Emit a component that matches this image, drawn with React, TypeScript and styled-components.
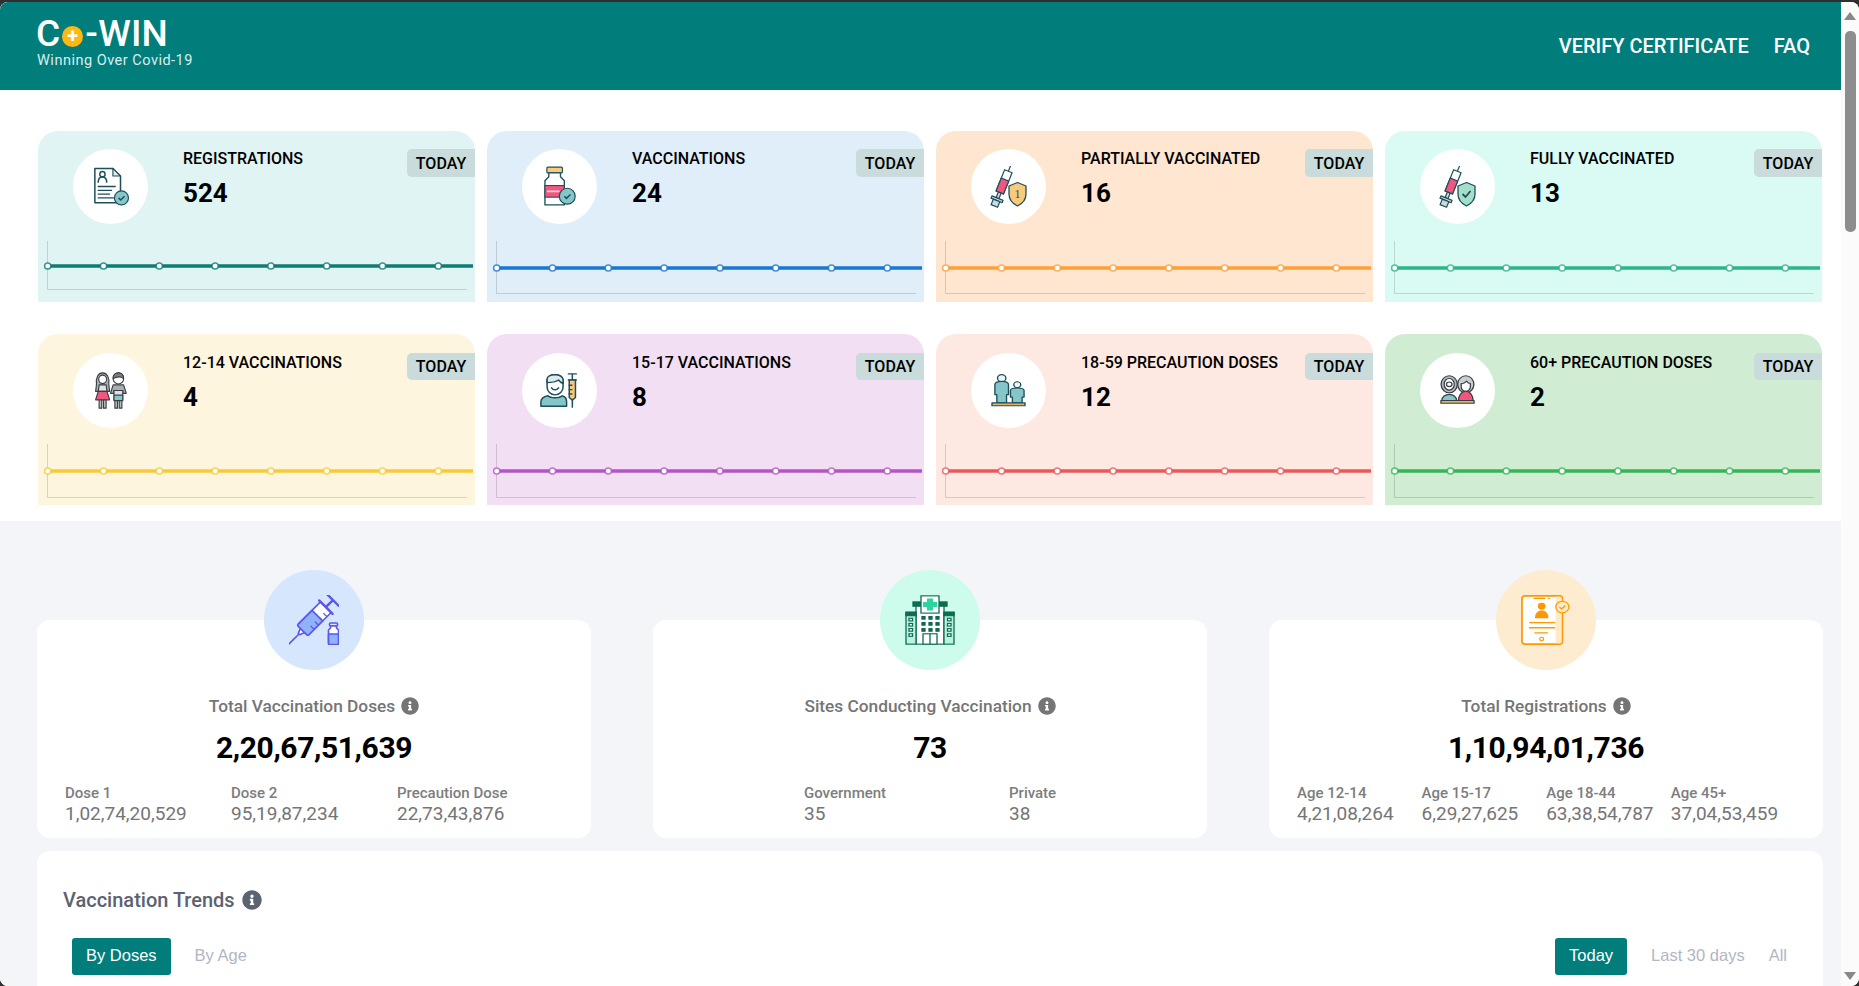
import styled, { createGlobalStyle } from 'styled-components';
import { FaInfoCircle } from 'react-icons/fa';

const GlobalStyle = createGlobalStyle`
  html, body {
    margin: 0;
    height: 100%;
    overflow: hidden;
    background: #2f2f2f;
    font-family: Roboto, "Liberation Sans", sans-serif;
  }
  #root {
    height: 100%;
  }
`;

const INK = '#1f4f5c';
const TEAL = '#85c6c8';

// ============================
//  Icons
// ============================

const CheckBadge = ({ cx, cy, r = 6.5 }: { cx: number; cy: number; r?: number }) => (
  <g>
    <circle cx={cx} cy={cy} r={r} fill={TEAL} stroke={INK} strokeWidth="1.2" />
    <path d={`M${cx - 3} ${cy} l2.2 2.2 l4 -4`} fill="none" stroke={INK} strokeWidth="1.6" />
  </g>
);

const RegistrationIcon = () => (
  <svg width="38" height="41" viewBox="0 0 40 42">
    <path d="M3 2h19l8 8v28H3z" fill="#fff" stroke={INK} strokeWidth="1.6" strokeLinejoin="round" />
    <path d="M22 2v8h8z" fill="#dfe9ea" stroke={INK} strokeWidth="1.2" strokeLinejoin="round" />
    <circle cx="11" cy="8" r="2.800" fill="none" stroke={INK} strokeWidth="1.500" />
    <path d="M6.500 17c0-4 2-6 4.500-6s4.500 2 4.500 6" fill="none" stroke={INK} strokeWidth="1.600" />
    <path d="M6 21h19M6 25h15M6 29h13M6 33h17" stroke={INK} strokeWidth="1.4" />
    <CheckBadge cx={31} cy={33} r={7.4} />
  </svg>
);

const VialIcon = () => (
  <svg width="33" height="41" viewBox="0 0 34 42">
    <rect x="4" y="1" width="16" height="6" rx="1" fill="#f9c97c" stroke={INK} strokeWidth="1.2" />
    <path d="M6 7h12v4l4 4v25H2V15l4-4z" fill="#fff" stroke={INK} strokeWidth="1.4" strokeLinejoin="round" />
    <rect x="2" y="20" width="20" height="12" fill="#f0567e" stroke={INK} strokeWidth="1.1" />
    <path d="M4 26h13" stroke="#fbd3dd" strokeWidth="2" />
    <CheckBadge cx={25} cy={31} r={8.2} />
  </svg>
);

const ShieldSyringeIcon = ({ tint, mark }: { tint: string; mark: 'one' | 'check' }) => (
  <svg width="37" height="42" viewBox="0 0 37 42">
    <g stroke={INK} strokeWidth="1.2" strokeLinejoin="round" transform="rotate(22 12 21)">
      <path d="M12 -3v8" fill="none" />
      <rect x="8" y="4" width="8" height="23" fill="#fff" />
      <rect x="8" y="13" width="8" height="14" fill="#f0567e" />
      <rect x="10.500" y="27" width="3" height="6" fill="#cfd8da" />
      <rect x="6" y="33" width="12" height="2.500" fill="#cfd8da" />
      <rect x="8.500" y="35.500" width="7" height="6" fill="#cfd8da" />
    </g>
    <path
      d="M19 20l8.500-3.500 8.500 3.500v8c0 6-4.500 10-8.500 12-4-2-8.500-6-8.500-12z"
      fill={tint}
      stroke={INK}
      strokeWidth="1.300"
      strokeLinejoin="round"
    />
    {mark === 'one' ? (
      <text x="27.500" y="32" textAnchor="middle" fontFamily="Liberation Serif, serif" fontSize="12" fill={INK}>
        1
      </text>
    ) : (
      <path d="M23.500 28l3 3 5-6" fill="none" stroke={INK} strokeWidth="1.8" />
    )}
  </svg>
);

const ChildrenIcon = () => (
  <svg width="35" height="39" viewBox="0 0 40 42" preserveAspectRatio="none">
    <g stroke="#3b3f44" strokeWidth="1.300" strokeLinejoin="round">
      <path d="M4 14c-1-7 2-12 7-12s8 5 7 12l1 8H3z" fill="#a9aeb2" />
      <circle cx="11" cy="9" r="4.500" fill="#fff" />
      <path d="M7 15h8l1 7H6z" fill="#dfe2e4" />
      <path d="M6 22h10l3 9H3z" fill="#f0567e" />
      <path d="M7 31h3v9H7zM12 31h3v9h-3z" fill="#b9bdc0" />
      <circle cx="29" cy="8" r="6" fill="#fff" />
      <path d="M23 8c0-4 3-6 6-6s6 2 6 6c-3-2-8-2-12 0z" fill="#7b8084" />
      <path d="M23 15h12l3 9h-4v-3H24v3h-4z" fill="#a9aeb2" />
      <path d="M24 21h10v10H24z" fill="#dfe2e4" />
      <path d="M24 26h10v6H24z" fill={TEAL} />
      <path d="M25 32h3v8h-3zM30 32h3v8h-3z" fill="#b9bdc0" />
    </g>
  </svg>
);

const TeenSyringeIcon = () => (
  <svg width="39" height="35" viewBox="0 0 44 40" preserveAspectRatio="none">
    <g stroke={INK} strokeWidth="1.700" strokeLinejoin="round" strokeLinecap="round">
      <path d="M8 8c0-4 4-6 9-6s8 2 9 6v8c0 5-4 9-9 9s-9-4-9-9z" fill="#fff" />
      <path d="M8 11V7c0-3 4-5 9-5s8 2 9 5v5c-3-1-4-3-5-4-3 2-9 3-13 3z" fill="#dfe9ea" />
      <path d="M13 17c2 3 6 3 8 0" fill="none" />
      <path d="M1 38v-5c0-4 3-6 8-7 3 3 13 3 16 0 4 1 5 3 5 7v5z" fill={TEAL} />
      <path d="M32 1h9M36.500 1v7M32 8h9" fill="none" />
      <path d="M33 8h7v20l-3.500 3-3.500-3z" fill="#f9c97c" />
      <path d="M36.500 31v8M33 14h3M33 19h3M33 24h3" fill="none" />
    </g>
  </svg>
);

const AdultsIcon = () => (
  <svg width="35" height="33" viewBox="0 0 36 40" preserveAspectRatio="none">
    <g stroke={INK} strokeWidth="1.400" strokeLinejoin="round">
      <circle cx="11" cy="5" r="4.300" fill="#e8f4f5" />
      <path d="M4 13c0-3 3-4 7-4s7 1 7 4v12h-2v10H6V25H4z" fill={TEAL} />
      <circle cx="27" cy="13" r="3.600" fill="#e8f4f5" />
      <path d="M20 20c0-2 3-3 7-3s7 1 7 3v8h-2v7H22v-7h-2z" fill={TEAL} />
      <rect x="1" y="35" width="34" height="3.500" fill="#d9b36b" />
    </g>
  </svg>
);

const SeniorsIcon = () => (
  <svg width="35" height="31" viewBox="0 0 38 40" preserveAspectRatio="none">
    <g stroke="#3b3f44" strokeWidth="1.400" strokeLinejoin="round">
      <ellipse cx="10" cy="12" rx="8.800" ry="11" fill="#b5babd" />
      <ellipse cx="10" cy="12" rx="5.500" ry="7.500" fill="#fff" />
      <circle cx="10" cy="12" r="3" fill="none" />
      <ellipse cx="28" cy="12" rx="8.800" ry="11" fill="#c9cdd0" />
      <path d="M23 11c2 1 5-2 6-3 1 2 3 3 4 3v4c0 3-2 6-5 6s-5-3-5-6z" fill="#fff" />
      <path d="M2 33c0-5 4-8 8-8s8 3 8 8z" fill={TEAL} />
      <path d="M20 33c0-6 3-12 8-12s8 6 8 12z" fill="#f0567e" />
      <rect x="1" y="33" width="36" height="3.500" fill="#d9b36b" />
    </g>
  </svg>
);

const BigSyringeIcon = () => (
  <svg width="50" height="50" viewBox="0 0 50 50">
    <g stroke="#5b56f0" strokeWidth="1.600" strokeLinejoin="round" strokeLinecap="round" fill="none">
      <g transform="translate(22 27) rotate(45)">
        <path d="M0 17v15M-3 12l2 5h2l2-5" fill="#fff" />
        <path d="M0 -21v-10M-8 -31h16" strokeWidth="2.400" />
        <rect x="-7.500" y="-21" width="15" height="33" rx="1.500" fill="#fff" />
        <path d="M-7.500 -9h15v19.500a1.500 1.500 0 0 1-1.500 1.500h-12a1.500 1.500 0 0 1-1.500-1.500z" fill="#8fb2fb" />
        <path d="M-9.500 -21h19" strokeWidth="2.400" />
        <path d="M3 -15h4.500M3 -9h4.500M3 -3h4.500M3 3h4.500" strokeWidth="1.200" />
      </g>
      <rect x="40.500" y="28" width="8" height="3" rx="1" fill="#dbe7fe" />
      <path d="M41.500 31v2l-2 2v13a1.500 1.500 0 0 0 1.500 1.500h7a1.500 1.500 0 0 0 1.500-1.500V35l-2-2v-2z" fill="#fff" />
      <path d="M39.500 39h10v9a1.500 1.500 0 0 1-1.500 1.500h-7a1.500 1.500 0 0 1-1.500-1.500z" fill="#8fb2fb" />
    </g>
  </svg>
);

const HospitalIcon = () => {
  const cells: [number, number][] = [];
  [25, 32, 39].forEach((y) => [17, 24, 31].forEach((x) => cells.push([x, y])));
  const side = [27, 33, 39, 45];
  return (
    <svg width="50" height="50" viewBox="0 0 50 58" preserveAspectRatio="none">
      <g stroke="#0c6b52" strokeWidth="1.300">
        <rect x="8" y="8" width="34" height="5" fill="#0c6b52" />
        <rect x="11" y="13" width="28" height="44" fill="#fff" />
        <rect x="16" y="1" width="18" height="20" fill="#fff" />
        <path d="M22 4h6v4h4v6h-4v4h-6v-4h-4V8h4z" fill="#2ed3a2" stroke="none" />
        <rect x="1" y="20" width="10" height="37" fill="#b9f3df" />
        <rect x="39" y="20" width="10" height="37" fill="#b9f3df" />
        <rect x="1" y="20" width="10" height="4" fill="#0c6b52" />
        <rect x="39" y="20" width="10" height="4" fill="#0c6b52" />
        {cells.map(([x, y]) => (
          <rect key={`${x}-${y}`} x={x} y={y} width="3" height="3" fill="#0c6b52" />
        ))}
        {side.map((y) => (
          <g key={y}>
            <rect x="4" y={y} width="3.500" height="3" fill="#fff" />
            <rect x="42.500" y={y} width="3.500" height="3" fill="#fff" />
          </g>
        ))}
        <rect x="18" y="45" width="14" height="12" fill="#fff" />
        <path d="M25 45v12" />
      </g>
    </svg>
  );
};

const PhoneDocIcon = () => (
  <svg width="50" height="50" viewBox="0 0 52 58" preserveAspectRatio="none">
    <rect x="1" y="1" width="42" height="56" rx="3" fill="#fff" stroke="#ff9800" strokeWidth="1.800" />
    <rect x="36" y="2" width="6" height="54" fill="#ffe9c7" />
    <path d="M13 4h12M28 4h2" stroke="#ff9800" strokeWidth="1.500" />
    <circle cx="21.500" cy="13" r="4" fill="#ff9800" />
    <path d="M14.500 27c0-6 3-9 7-9s7 3 7 9z" fill="#ff9800" />
    <path d="M8.500 32h27M8.500 38h27M14 44h14" stroke="#ff9800" strokeWidth="1.600" />
    <circle cx="21.500" cy="51" r="2" fill="none" stroke="#ff9800" strokeWidth="1.300" />
    <circle cx="43" cy="14" r="6.800" fill="#ffe9c7" stroke="#ff9800" strokeWidth="1.300" />
    <path d="M40 14l2.200 2.200 3.800-4" fill="none" stroke="#ff9800" strokeWidth="1.400" />
  </svg>
);

// ============================
//  Data
// ============================

type Tile = {
  title: string;
  value: string;
  bg: string;
  line: string;
  icon: React.ReactNode;
  lineY: number;
  axisY: number;
};

const firstRow: Tile[] = [
  { title: 'REGISTRATIONS', value: '524', bg: '#e0f5f3', line: '#0e7c72', icon: <RegistrationIcon />, lineY: 25, axisY: 48 },
  { title: 'VACCINATIONS', value: '24', bg: '#e0eef9', line: '#1976d2', icon: <VialIcon />, lineY: 27, axisY: 52 },
  { title: 'PARTIALLY VACCINATED', value: '16', bg: '#fee6d0', line: '#ff9f38', icon: <ShieldSyringeIcon tint="#f9c97c" mark="one" />, lineY: 27, axisY: 52 },
  { title: 'FULLY VACCINATED', value: '13', bg: '#dafbf4', line: '#2db488', icon: <ShieldSyringeIcon tint="#a5dfca" mark="check" />, lineY: 27, axisY: 52 },
];

const secondRow: Tile[] = [
  { title: '12-14 VACCINATIONS', value: '4', bg: '#fdf5dd', line: '#f8cb36', icon: <ChildrenIcon />, lineY: 27, axisY: 53 },
  { title: '15-17 VACCINATIONS', value: '8', bg: '#f2dff3', line: '#b455c5', icon: <TeenSyringeIcon />, lineY: 27, axisY: 53 },
  { title: '18-59 PRECAUTION DOSES', value: '12', bg: '#fde9e1', line: '#e85a5a', icon: <AdultsIcon />, lineY: 27, axisY: 53 },
  { title: '60+ PRECAUTION DOSES', value: '2', bg: '#d0edd4', line: '#37b556', icon: <SeniorsIcon />, lineY: 27, axisY: 53 },
];

const statCards = [
  {
    title: 'Total Vaccination Doses',
    value: '2,20,67,51,639',
    tint: '#d6e6fd',
    icon: <BigSyringeIcon />,
    left: 28,
    cols: '166px 166px 1fr',
    items: [
      ['Dose 1', '1,02,74,20,529'],
      ['Dose 2', '95,19,87,234'],
      ['Precaution Dose', '22,73,43,876'],
    ],
  },
  {
    title: 'Sites Conducting Vaccination',
    value: '73',
    tint: '#cdfcec',
    icon: <HospitalIcon />,
    left: 151,
    cols: '205px 1fr',
    items: [
      ['Government', '35'],
      ['Private', '38'],
    ],
  },
  {
    title: 'Total Registrations',
    value: '1,10,94,01,736',
    tint: '#feecd0',
    icon: <PhoneDocIcon />,
    left: 28,
    cols: '124.6px 124.6px 124.6px 1fr',
    items: [
      ['Age 12-14', '4,21,08,264'],
      ['Age 15-17', '6,29,27,625'],
      ['Age 18-44', '63,38,54,787'],
      ['Age 45+', '37,04,53,459'],
    ],
  },
];

// ============================
//  Parts
// ============================

const Sparkline = ({ color, lineY, axisY }: { color: string; lineY: number; axisY: number }) => (
  <ChartSvg viewBox="0 0 437 61">
    <path d={`M9.500 0V${axisY + 0.5}H429`} fill="none" stroke="#000" strokeOpacity="0.14" />
    <line x1="10" x2="435" y1={lineY} y2={lineY} stroke={color} strokeWidth="3.500" />
    {Array.from({ length: 8 }, (_, i) => (
      <circle key={i} cx={9.7 + 55.8 * i} cy={lineY} r="3.100" fill="#fff" stroke={color} strokeOpacity="0.8" strokeWidth="1.500" />
    ))}
  </ChartSvg>
);

const TileCard = ({ tile, top }: { tile: Tile; top: number }) => (
  <Card $bg={tile.bg}>
    <CardTop $top={top}>
      <IconCircle>{tile.icon}</IconCircle>
      <CardText>
        <CardTitle>{tile.title}</CardTitle>
        <CardValue>{tile.value}</CardValue>
      </CardText>
      <TodayBadge $high={top === 18}>TODAY</TodayBadge>
    </CardTop>
    <Sparkline color={tile.line} lineY={tile.lineY} axisY={tile.axisY} />
  </Card>
);

export default function App() {
  return (
    <Shell>
      <GlobalStyle />
      <Page>
        <Header>
          <Logo>
            <LogoMark>
              C<LogoDot>+</LogoDot>-WIN
            </LogoMark>
            <LogoTag>Winning Over Covid-19</LogoTag>
          </Logo>
          <Nav>
            <NavLink>VERIFY CERTIFICATE</NavLink>
            <NavLink>FAQ</NavLink>
          </Nav>
        </Header>

        <Tiles>
          {firstRow.map((t) => (
            <TileCard key={t.title} tile={t} top={18} />
          ))}
          {secondRow.map((t) => (
            <TileCard key={t.title} tile={t} top={19} />
          ))}
        </Tiles>

        <Summary>
          <StatGrid>
            {statCards.map((c) => (
              <StatCard key={c.title}>
                <StatCircle $tint={c.tint}>{c.icon}</StatCircle>
                <StatTitle>
                  {c.title}
                  <FaInfoCircle size={18} />
                </StatTitle>
                <StatValue>{c.value}</StatValue>
                <Breakdown $left={c.left} $cols={c.cols}>
                  {c.items.map(([label, value]) => (
                    <div key={label}>
                      <BreakdownLabel>{label}</BreakdownLabel>
                      <BreakdownValue>{value}</BreakdownValue>
                    </div>
                  ))}
                </Breakdown>
              </StatCard>
            ))}
          </StatGrid>

          <Trends>
            <TrendsTitle>
              Vaccination Trends
              <FaInfoCircle size={20} />
            </TrendsTitle>
            <TrendsControls>
              <TabGroup>
                <Tab $active>By Doses</Tab>
                <Tab>By Age</Tab>
              </TabGroup>
              <TabGroup>
                <Tab $active>Today</Tab>
                <Tab>Last 30 days</Tab>
                <Tab>All</Tab>
              </TabGroup>
            </TrendsControls>
          </Trends>
        </Summary>
      </Page>

      <Scrollbar>
        <ArrowUp />
        <Thumb />
        <ArrowDown />
      </Scrollbar>
    </Shell>
  );
}

// ============================
//  Styled Components
// ============================

const Shell = styled.div`
  display: flex;
  height: 984px;
  margin-top: 2px;
  border-radius: 8px;
  overflow: hidden;
  background: #fff;
`;

const Page = styled.main`
  flex: 1;
  min-width: 0;
  overflow: hidden;
  background: #fff;
`;

const Header = styled.header`
  display: flex;
  align-items: center;
  justify-content: space-between;
  height: 88px;
  padding: 0 31px 0 36px;
  background: #017e7c;
  color: #fff;
`;

const Logo = styled.div`
  display: flex;
  flex-direction: column;
  margin-top: -9px;
`;

const LogoMark = styled.div`
  display: flex;
  align-items: center;
  font-size: 37px;
  line-height: 38px;
  font-weight: 500;
  letter-spacing: 0.2px;
`;

const LogoDot = styled.span`
  display: flex;
  align-items: center;
  justify-content: center;
  width: 21px;
  height: 21px;
  margin: 6px 2px 0 2px;
  border-radius: 50%;
  background: #fdb913;
  font-size: 20px;
  line-height: 21px;
  font-weight: 700;
`;

const LogoTag = styled.div`
  padding-left: 1px;
  font-size: 14.5px;
  line-height: 16px;
  letter-spacing: 0.5px;
  color: #dcecec;
`;

const Nav = styled.nav`
  display: flex;
  gap: 25px;
`;

const NavLink = styled.a`
  font-size: 20px;
  font-weight: 500;
  color: #fff;
`;

const Tiles = styled.section`
  display: grid;
  grid-template-columns: repeat(4, 437px);
  gap: 32px 12px;
  padding: 41px 0 16px 38px;
`;

const Card = styled.article<{ $bg: string }>`
  display: flex;
  flex-direction: column;
  height: 171px;
  border-radius: 20px 20px 0 0;
  background: ${({ $bg }) => $bg};
  overflow: hidden;
`;

const CardTop = styled.div<{ $top: number }>`
  display: flex;
  align-items: flex-start;
  height: ${({ $top }) => 110 - $top}px;
  padding: ${({ $top }) => $top}px 0 0 35px;
`;

const IconCircle = styled.div`
  display: flex;
  align-items: center;
  justify-content: center;
  flex: none;
  width: 75px;
  height: 75px;
  border-radius: 50%;
  background: #fff;
`;

const CardText = styled.div`
  flex: 1;
  padding: 1px 0 0 35px;
`;

const CardTitle = styled.div`
  font-size: 16px;
  line-height: 18px;
  font-weight: 500;
  color: #000;
`;

const CardValue = styled.div`
  margin-top: 9px;
  font-size: 26px;
  line-height: 32px;
  font-weight: 700;
  color: #000;
`;

const TodayBadge = styled.div<{ $high: boolean }>`
  flex: none;
  width: 68px;
  height: ${({ $high }) => ($high ? 28 : 27)}px;
  line-height: ${({ $high }) => ($high ? 29 : 28)}px;
  border-radius: 5px 0 0 5px;
  background: #c9dbdb;
  font-size: 16px;
  font-weight: 500;
  text-align: center;
  color: #000;
`;

const ChartSvg = styled.svg`
  display: block;
  flex: none;
  width: 437px;
  height: 61px;
`;

const Summary = styled.section`
  padding: 99px 18px 0 37px;
  background: #f4f5f9;
`;

const StatGrid = styled.div`
  display: grid;
  grid-template-columns: repeat(3, 554px);
  gap: 62px;
`;

const StatCard = styled.article`
  display: flex;
  flex-direction: column;
  align-items: center;
  height: 218px;
  border-radius: 13px;
  background: #fff;
`;

const StatCircle = styled.div<{ $tint: string }>`
  display: flex;
  align-items: center;
  justify-content: center;
  flex: none;
  width: 100px;
  height: 100px;
  margin-top: -50px;
  border-radius: 50%;
  background: ${({ $tint }) => $tint};
`;

const StatTitle = styled.div`
  display: flex;
  align-items: center;
  gap: 6px;
  margin-top: 25px;
  font-size: 17.3px;
  line-height: 22px;
  font-weight: 500;
  color: #757575;
`;

const StatValue = styled.div`
  margin-top: 11px;
  font-size: 30px;
  line-height: 40px;
  font-weight: 700;
  letter-spacing: -0.4px;
  color: #000;
`;

const Breakdown = styled.div<{ $left: number; $cols: string }>`
  display: grid;
  align-self: stretch;
  grid-template-columns: ${({ $cols }) => $cols};
  margin-top: 16px;
  padding-left: ${({ $left }) => $left}px;
`;

const BreakdownLabel = styled.div`
  font-size: 15px;
  line-height: 18px;
  font-weight: 500;
  color: #7d7d7d;
`;

const BreakdownValue = styled.div`
  margin-top: 1px;
  font-size: 19px;
  line-height: 22px;
  color: #757575;
`;

const Trends = styled.article`
  height: 200px;
  margin-top: 13px;
  padding: 37px 36px 0 26px;
  border-radius: 13px;
  background: #fff;
`;

const TrendsTitle = styled.h2`
  display: flex;
  align-items: center;
  gap: 7px;
  margin: 0;
  font-size: 20px;
  line-height: 24px;
  font-weight: 500;
  color: #5b6270;
`;

const TrendsControls = styled.div`
  display: flex;
  justify-content: space-between;
  margin-top: 26px;
  padding-left: 9px;
`;

const TabGroup = styled.div`
  display: flex;
  gap: 24px;
`;

const Tab = styled.button<{ $active?: boolean }>`
  height: 37px;
  padding: 0 ${({ $active }) => ($active ? '14px' : '0')} 2px;
  border: 0;
  border-radius: 3px;
  background: ${({ $active }) => ($active ? '#017e7c' : 'transparent')};
  color: ${({ $active }) => ($active ? '#fff' : '#b0b7c3')};
  font-family: "Liberation Sans", Arial, sans-serif;
  font-size: 16.5px;
`;

const Scrollbar = styled.aside`
  display: flex;
  flex-direction: column;
  align-items: center;
  flex: none;
  width: 18px;
  padding: 10px 0 6px;
  box-sizing: border-box;
  background: #fbfbfb;
`;

const ArrowUp = styled.div`
  width: 0;
  height: 0;
  border: 6px solid transparent;
  border-top: 0;
  border-bottom: 8px solid #888;
`;

const Thumb = styled.div`
  width: 11px;
  height: 201px;
  margin-top: 11px;
  border-radius: 5px;
  background: #8d8d8d;
`;

const ArrowDown = styled.div`
  width: 0;
  height: 0;
  margin-top: auto;
  border: 6px solid transparent;
  border-bottom: 0;
  border-top: 8px solid #888;
`;
